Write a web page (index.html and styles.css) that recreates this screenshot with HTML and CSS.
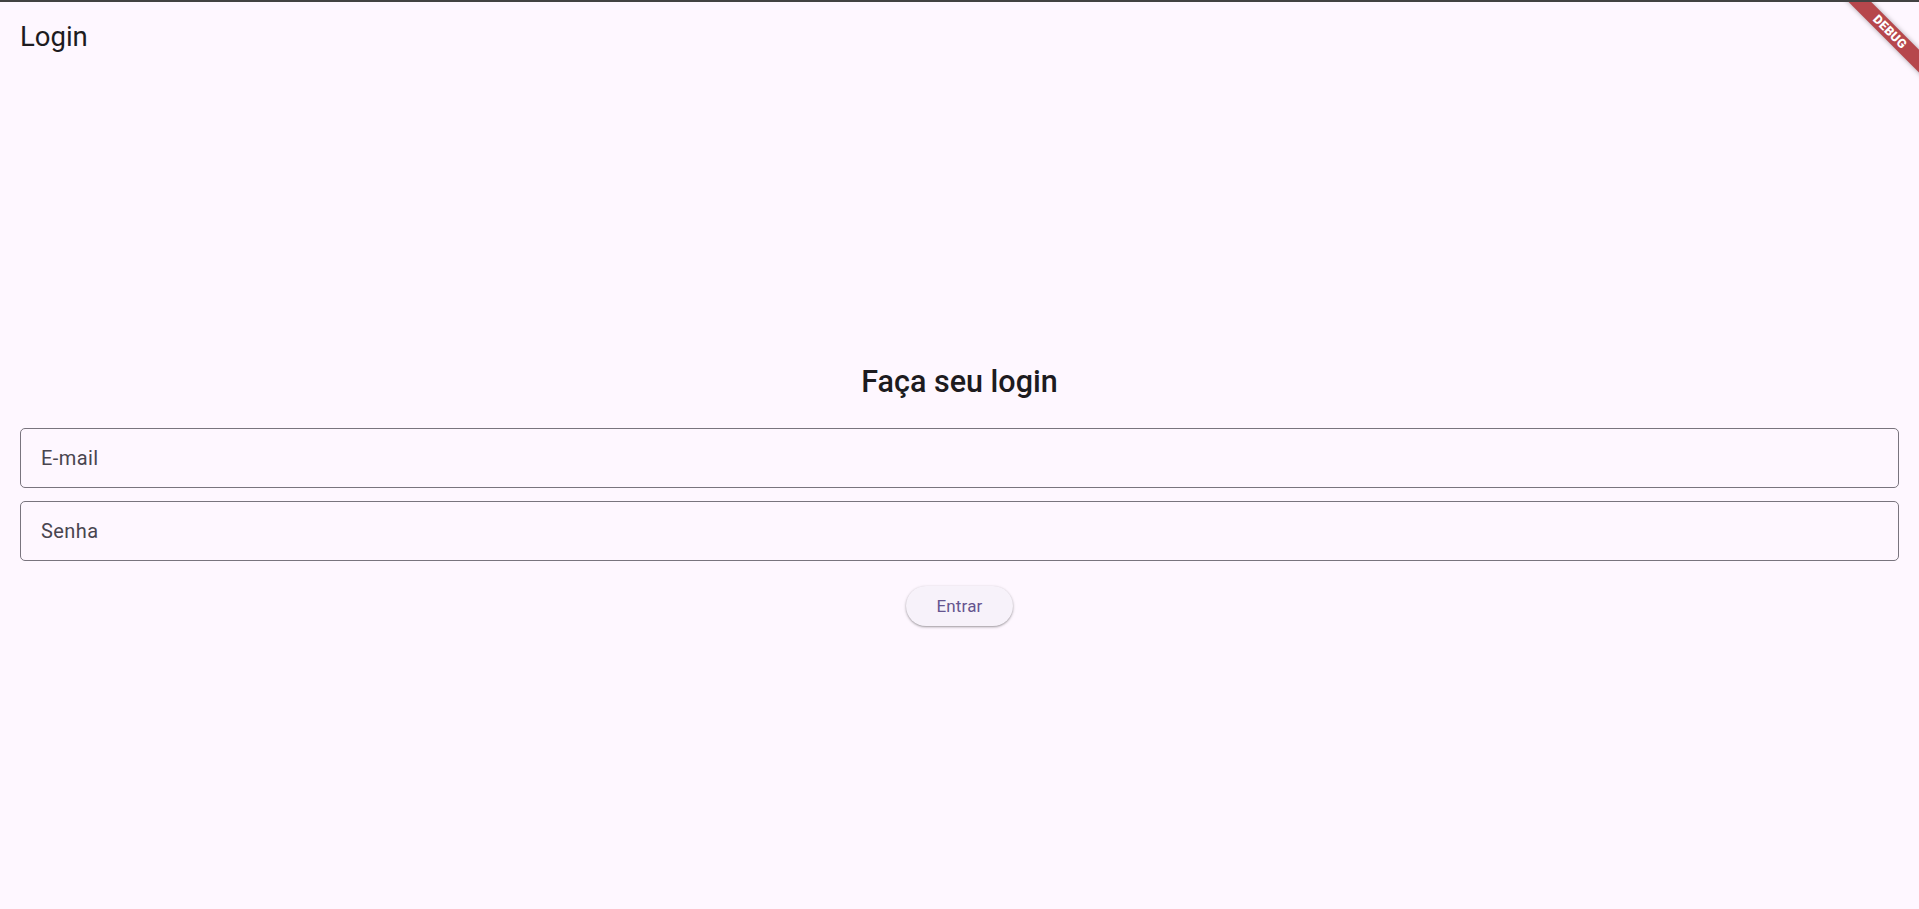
FILE: index.html
```html
<!DOCTYPE html>
<html lang="pt">
<head>
<meta charset="utf-8">
<title>Login</title>
<link rel="stylesheet" href="styles.css">
</head>
<body>
<div class="top-line"></div>
<header class="app-bar">
  <span class="app-title">Login</span>
</header>
<main class="content">
  <h1 class="heading">Faça seu login</h1>
  <div class="field"><span class="field-label">E-mail</span></div>
  <div class="field field-second"><span class="field-label">Senha</span></div>
  <div class="actions">
    <button class="btn" type="button">Entrar</button>
  </div>
</main>
<div class="debug-banner"><div class="ribbon">DEBUG</div></div>
</body>
</html>
```
FILE: styles.css
```css
html, body {
  margin: 0;
  padding: 0;
}
body {
  background: #fef7ff;
  font-family: Roboto, "Noto Sans", sans-serif;
  color: #1d1b20;
  height: 909px;
  overflow: hidden;
  position: relative;
}
.top-line {
  height: 2px;
  background: #424242;
  position: relative;
  z-index: 5;
}
.app-bar {
  height: 68px;
  display: flex;
  align-items: center;
  padding-left: 20px;
  padding-top: 2px;
  box-sizing: border-box;
}
.app-title {
  font-size: 27.5px;
  line-height: 1;
  font-weight: 400;
  color: #1d1b20;
}
.content {
  height: 839px;
  box-sizing: border-box;
  padding: 10px 20px 0;
  display: flex;
  flex-direction: column;
  justify-content: center;
}
.heading {
  margin: 0 0 28px;
  font-size: 30.5px;
  line-height: 36px;
  font-weight: 500;
  text-align: center;
  color: #1d1b20;
}
.field {
  height: 60px;
  box-sizing: border-box;
  border: 1.2px solid #79747e;
  border-radius: 5px;
  display: flex;
  align-items: center;
  padding-left: 20px;
}
.field-second {
  margin-top: 13px;
}
.field-label {
  font-size: 20px;
  color: #49454f;
  letter-spacing: 0.4px;
}
.actions {
  margin-top: 25px;
  display: flex;
  justify-content: center;
}
.btn {
  width: 107px;
  height: 40px;
  border: none;
  border-radius: 20px;
  background: #f7f2fa;
  box-shadow: 0 1px 2px rgba(0, 0, 0, 0.3), 0 1px 3px 1px rgba(0, 0, 0, 0.08);
  font-family: Roboto, sans-serif;
  font-size: 17px;
  font-weight: 400;
  letter-spacing: 0.15px;
  color: #65558f;
  padding: 0;
}
.debug-banner {
  position: absolute;
  top: 0;
  right: 0;
  width: 100px;
  height: 100px;
  overflow: hidden;
  pointer-events: none;
}
.ribbon {
  position: absolute;
  left: 1px;
  top: 24px;
  width: 140px;
  height: 15.6px;
  line-height: 15.6px;
  background: #b6474c;
  box-shadow: 0 0 5px rgba(0, 0, 0, 0.35);
  color: #ffffff;
  font-family: Roboto, sans-serif;
  font-weight: 900;
  font-size: 12.5px;
  letter-spacing: 0.3px;
  text-align: center;
  transform: rotate(45deg);
}
```
